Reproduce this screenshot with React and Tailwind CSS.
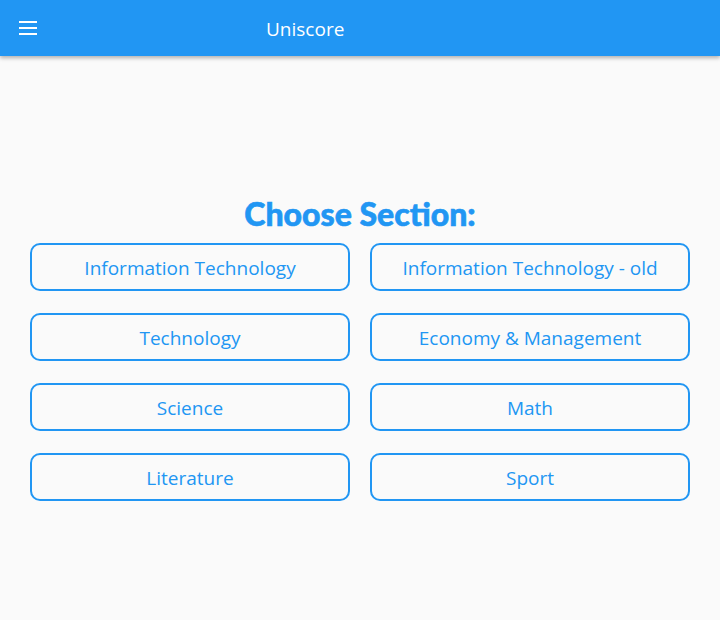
import React from 'react';

const sections = [
  'Information Technology',
  'Information Technology - old',
  'Technology',
  'Economy & Management',
  'Science',
  'Math',
  'Literature',
  'Sport',
];

const App = () => {
  return (
    <div className="min-h-[620px] bg-[#fafafa] font-['Open_Sans',sans-serif]">
      <header className="h-14 bg-[#2196f3] flex items-center shadow-[0_2px_4px_rgba(0,0,0,0.3)] relative z-10">
        <button className="ml-[19px] w-[18px] flex flex-col gap-[4px]">
          <span className="block h-[2px] bg-white"></span>
          <span className="block h-[2px] bg-white"></span>
          <span className="block h-[2px] bg-white"></span>
        </button>
        <h1 className="ml-[229px] pt-[3px] text-white text-[19px]">Uniscore</h1>
      </header>

      <main className="px-[30px] pt-[138px]">
        <h2 className="text-center text-[#2196f3] text-[32px] font-black font-['Lato',sans-serif] leading-[40px] mb-[9px] [-webkit-text-stroke:0.6px_#2196f3]">
          Choose Section:
        </h2>
        <div className="grid grid-cols-2 gap-x-[20px] gap-y-[22px]">
          {sections.map((s) => (
            <button
              key={s}
              className="h-12 pt-[3px] border-2 border-[#2196f3] rounded-[10px] text-[#2196f3] text-[19px] hover:bg-blue-50"
            >
              {s}
            </button>
          ))}
        </div>
      </main>
    </div>
  );
};

export default App;
